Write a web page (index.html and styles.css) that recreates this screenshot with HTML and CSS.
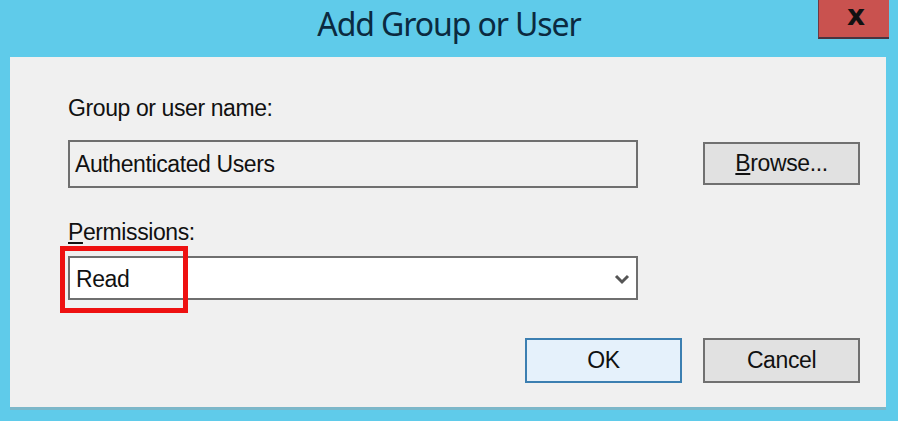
FILE: index.html
```html
<!DOCTYPE html>
<html>
    <head>
        <meta charset="UTF-8">
        <title>Add Group or User</title>
        <link rel="stylesheet" href="styles.css">
    </head>
    <body>
        <div class="window">
            <div class="titlebar">
                <span></span>
                <h1 class="title">Add Group or User</h1>
                <button class="close">x</button>
            </div>
            <div class="panel">
                <div class="label">Group or user name:</div>
                <div class="row">
                    <div class="textbox">Authenticated Users</div>
                    <button class="btn btn-browse"><u>B</u>rowse...</button>
                </div>
                <div class="label label-perm"><u>P</u>ermissions:</div>
                <div class="combo-wrap">
                    <div class="combo">
                        <span>Read</span>
                        <svg class="chev" width="16" height="12" viewBox="0 0 16 12">
                            <path d="M2 3 L8 9 L14 3" fill="none" stroke="#555" stroke-width="3"/>
                        </svg>
                    </div>
                    <div class="highlight"></div>
                </div>
                <div class="actions">
                    <button class="btn btn-ok">OK</button>
                    <button class="btn">Cancel</button>
                </div>
            </div>
        </div>
    </body>
</html>
```

FILE: styles.css
```css
body{
    margin:0;
    background-color:#5fcbea;
    font-family:'Liberation Sans', Arial, sans-serif;
    color:#111;
}

.window{
    height:421px;
}

.titlebar{
    height:57px;
    display:grid;
    grid-template-columns:1fr auto 1fr;
    align-items:start;
}

.title{
    margin:0;
    padding-top:4px;
    font-family:'Noto Sans', sans-serif;
    font-weight:normal;
    font-size:32px;
    letter-spacing:-1.1px;
    color:#0b2a40;
    line-height:40px;
}

.close{
    justify-self:end;
    margin-right:9px;
    width:71px;
    height:39px;
    display:flex;
    align-items:center;
    justify-content:center;
    background-color:#c9524f;
    border:none;
    border-left:1px solid #6b3a44;
    border-bottom:2px solid #4a3440;
    font-family:'DejaVu Sans', sans-serif;
    font-weight:bold;
    font-size:28px;
    line-height:1;
    color:#111;
    padding:0 0 6px 4px;
}

.panel{
    margin:0 12px 0 10px;
    height:353px;
    box-sizing:border-box;
    background-color:#f0f0f0;
    border-bottom:3px solid #7cb7c9;
    padding:37px 0 0 58px;
}

.label{
    font-size:23px;
    letter-spacing:-0.4px;
    line-height:28px;
}

.row{
    display:flex;
    align-items:flex-start;
    margin-top:18px;
}

.textbox{
    width:570px;
    height:48px;
    box-sizing:border-box;
    border:2px solid #6f6f6f;
    background-color:#f0f0f0;
    padding:6px 0 0 5px;
    font-size:23px;
    letter-spacing:-0.4px;
    line-height:32px;
}

.btn{
    width:157px;
    height:45px;
    box-sizing:border-box;
    background-color:#e1e1e1;
    border:2px solid #707070;
    font-family:'Liberation Sans', Arial, sans-serif;
    font-size:23px;
    letter-spacing:-0.4px;
    color:#111;
    padding:0;
}

.btn-browse{
    height:43px;
    margin-left:65px;
    margin-top:2px;
}

.label-perm{
    margin-top:30px;
}

.combo-wrap{
    position:relative;
    margin-top:10px;
    width:570px;
}

.combo{
    height:44px;
    box-sizing:border-box;
    border:2px solid #6f6f6f;
    background-color:#fff;
    display:flex;
    align-items:center;
    justify-content:space-between;
    padding:2px 6px 0 6px;
    font-size:23px;
    letter-spacing:-0.4px;
}

.highlight{
    position:absolute;
    left:-8px;
    top:-10px;
    width:128px;
    height:67px;
    box-sizing:border-box;
    border:5px solid #ee1111;
}

.actions{
    display:flex;
    justify-content:flex-end;
    gap:21px;
    margin-top:38px;
    margin-right:26px;
}

.btn-ok{
    background-color:#e5f1fb;
    border-color:#3c7fb1;
}
```
